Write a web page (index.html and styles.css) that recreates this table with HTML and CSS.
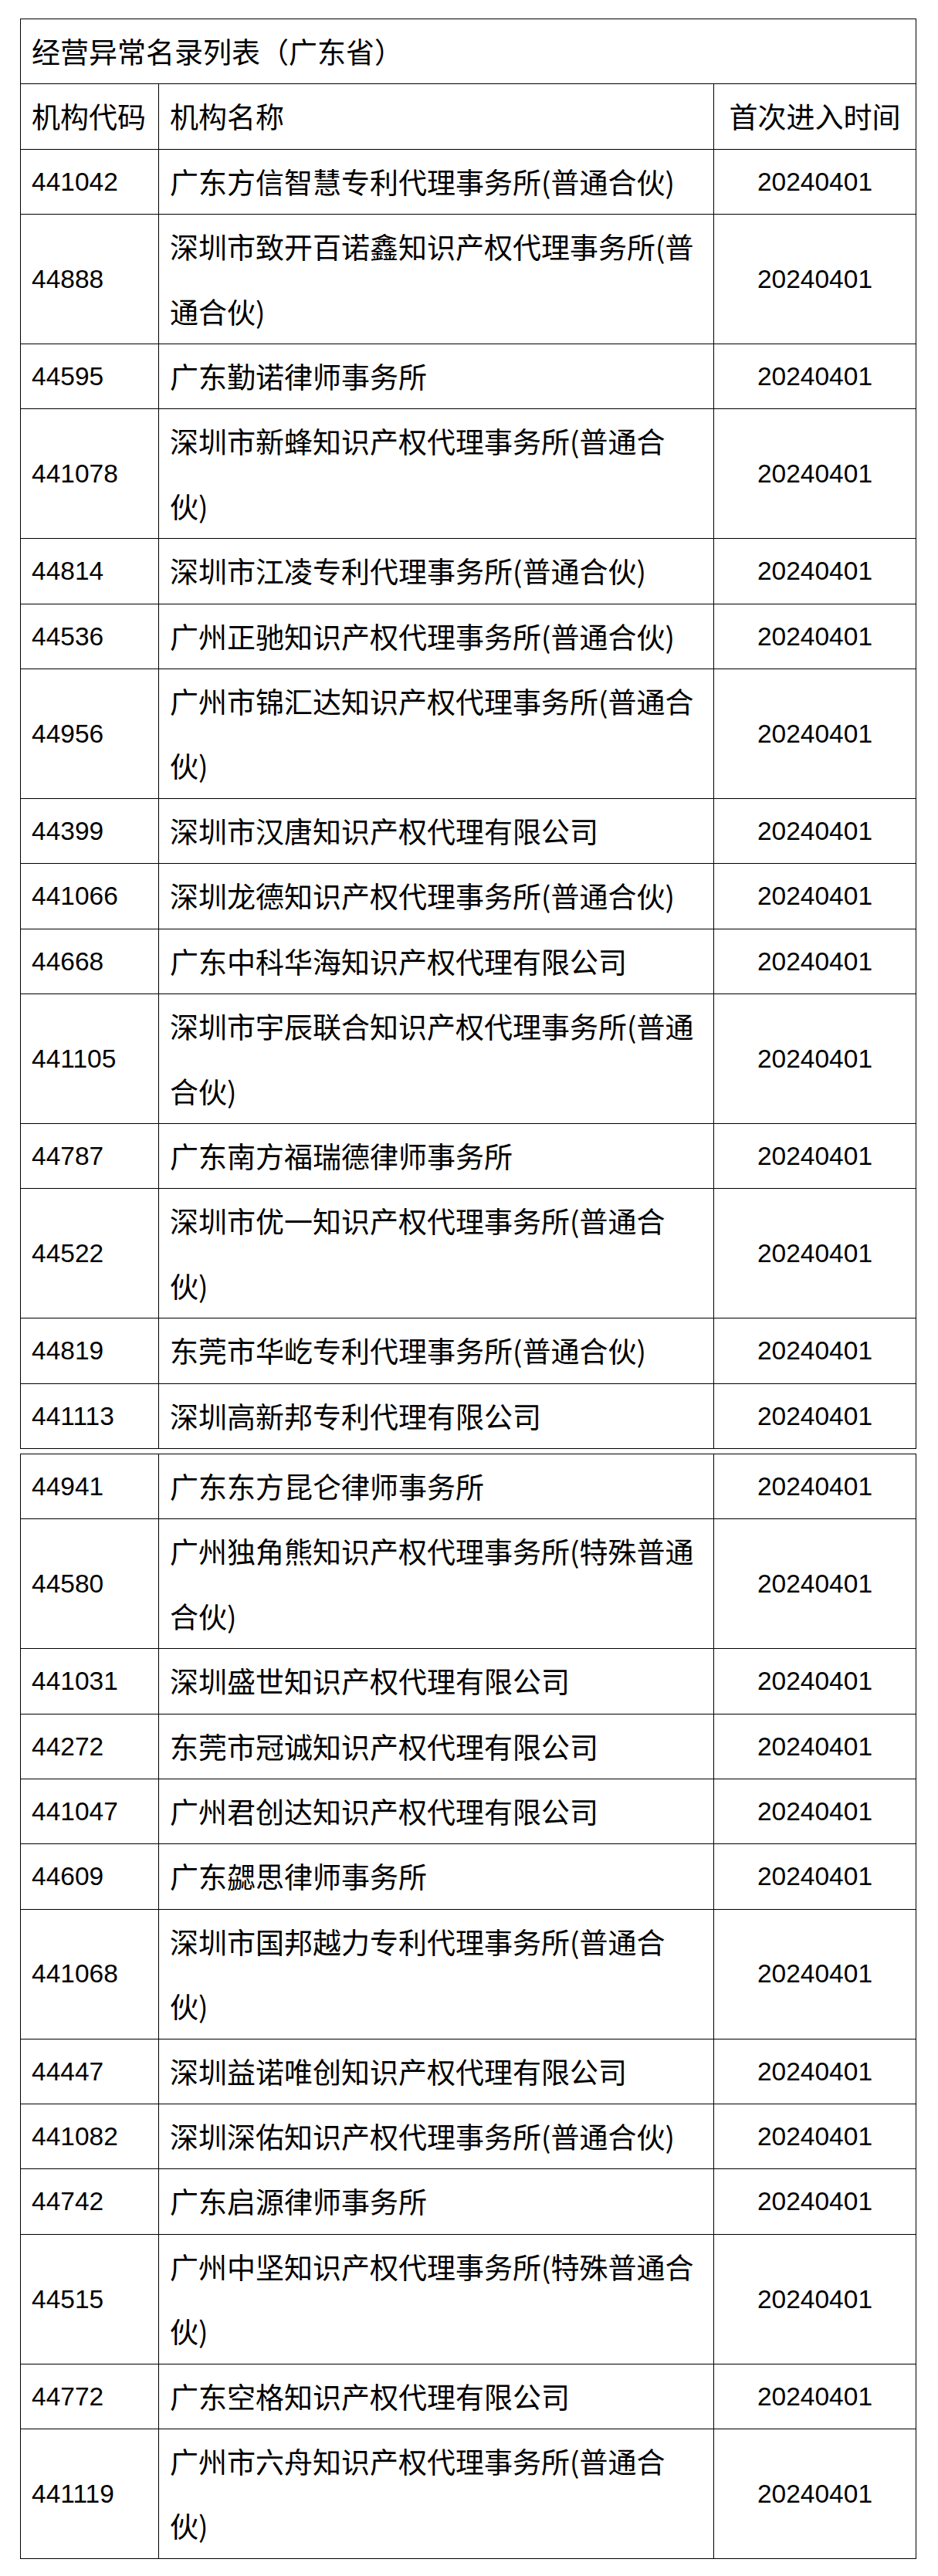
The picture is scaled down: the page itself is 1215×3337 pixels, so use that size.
FILE: index.html
```html
<!DOCTYPE html>
<html lang="zh-CN">
<head>
<meta charset="utf-8">
<title>经营异常名录列表（广东省）</title>
<link rel="stylesheet" href="styles.css">
</head>
<body>
<main class="page">
<table class="list">
<colgroup><col class="c-code"><col class="c-name"><col class="c-date"></colgroup>
<tr><td class="title" colspan="3">经营异常名录列表（广东省）</td></tr>
<tr><td class="cjk">机构代码</td><td class="cjk">机构名称</td><td class="cjk center">首次进入时间</td></tr>
<tr><td class="code">441042</td><td class="cjk">广东方信智慧专利代理事务所(普通合伙)</td><td class="date">20240401</td></tr>
<tr><td class="code">44888</td><td class="cjk">深圳市致开百诺鑫知识产权代理事务所(普<br>通合伙)</td><td class="date">20240401</td></tr>
<tr><td class="code">44595</td><td class="cjk">广东勤诺律师事务所</td><td class="date">20240401</td></tr>
<tr><td class="code">441078</td><td class="cjk">深圳市新蜂知识产权代理事务所(普通合<br>伙)</td><td class="date">20240401</td></tr>
<tr><td class="code">44814</td><td class="cjk">深圳市江凌专利代理事务所(普通合伙)</td><td class="date">20240401</td></tr>
<tr><td class="code">44536</td><td class="cjk">广州正驰知识产权代理事务所(普通合伙)</td><td class="date">20240401</td></tr>
<tr><td class="code">44956</td><td class="cjk">广州市锦汇达知识产权代理事务所(普通合<br>伙)</td><td class="date">20240401</td></tr>
<tr><td class="code">44399</td><td class="cjk">深圳市汉唐知识产权代理有限公司</td><td class="date">20240401</td></tr>
<tr><td class="code">441066</td><td class="cjk">深圳龙德知识产权代理事务所(普通合伙)</td><td class="date">20240401</td></tr>
<tr><td class="code">44668</td><td class="cjk">广东中科华海知识产权代理有限公司</td><td class="date">20240401</td></tr>
<tr><td class="code">441105</td><td class="cjk">深圳市宇辰联合知识产权代理事务所(普通<br>合伙)</td><td class="date">20240401</td></tr>
<tr><td class="code">44787</td><td class="cjk">广东南方福瑞德律师事务所</td><td class="date">20240401</td></tr>
<tr><td class="code">44522</td><td class="cjk">深圳市优一知识产权代理事务所(普通合<br>伙)</td><td class="date">20240401</td></tr>
<tr><td class="code">44819</td><td class="cjk">东莞市华屹专利代理事务所(普通合伙)</td><td class="date">20240401</td></tr>
<tr><td class="code">441113</td><td class="cjk">深圳高新邦专利代理有限公司</td><td class="date">20240401</td></tr>
</table>
<table class="list">
<colgroup><col class="c-code"><col class="c-name"><col class="c-date"></colgroup>
<tr><td class="code">44941</td><td class="cjk">广东东方昆仑律师事务所</td><td class="date">20240401</td></tr>
<tr><td class="code">44580</td><td class="cjk">广州独角熊知识产权代理事务所(特殊普通<br>合伙)</td><td class="date">20240401</td></tr>
<tr><td class="code">441031</td><td class="cjk">深圳盛世知识产权代理有限公司</td><td class="date">20240401</td></tr>
<tr><td class="code">44272</td><td class="cjk">东莞市冠诚知识产权代理有限公司</td><td class="date">20240401</td></tr>
<tr><td class="code">441047</td><td class="cjk">广州君创达知识产权代理有限公司</td><td class="date">20240401</td></tr>
<tr><td class="code">44609</td><td class="cjk">广东勰思律师事务所</td><td class="date">20240401</td></tr>
<tr><td class="code">441068</td><td class="cjk">深圳市国邦越力专利代理事务所(普通合<br>伙)</td><td class="date">20240401</td></tr>
<tr><td class="code">44447</td><td class="cjk">深圳益诺唯创知识产权代理有限公司</td><td class="date">20240401</td></tr>
<tr><td class="code">441082</td><td class="cjk">深圳深佑知识产权代理事务所(普通合伙)</td><td class="date">20240401</td></tr>
<tr><td class="code">44742</td><td class="cjk">广东启源律师事务所</td><td class="date">20240401</td></tr>
<tr><td class="code">44515</td><td class="cjk">广州中坚知识产权代理事务所(特殊普通合<br>伙)</td><td class="date">20240401</td></tr>
<tr><td class="code">44772</td><td class="cjk">广东空格知识产权代理有限公司</td><td class="date">20240401</td></tr>
<tr><td class="code">441119</td><td class="cjk">广州市六舟知识产权代理事务所(普通合<br>伙)</td><td class="date">20240401</td></tr>
</table>
</main>
</body>
</html>
```

FILE: styles.css
```css
html, body {
  margin: 0;
  padding: 0;
  background: #fff;
}

.page {
  padding: 24px 0 0 26px;
}

.list {
  border-collapse: collapse;
  table-layout: fixed;
  width: 1160px;
}

.list + .list {
  margin-top: 6px;
}

.c-code { width: 179px; }
.c-name { width: 719px; }
.c-date { width: 262px; }

.list td {
  border: 1px solid #000;
  padding: 0 6px 0 14px;
  line-height: 83.4px;
  color: #000;
  white-space: nowrap;
  vertical-align: middle;
  text-align: left;
}

.title,
.cjk {
  font-family: "Noto Sans CJK SC", sans-serif;
  font-size: 37px;
  font-weight: 400;
}

.code,
.date {
  font-family: "Liberation Sans", Arial, sans-serif;
  font-size: 33.5px;
}

.list td.center,
.list td.date {
  text-align: center;
  padding: 0;
}
```
